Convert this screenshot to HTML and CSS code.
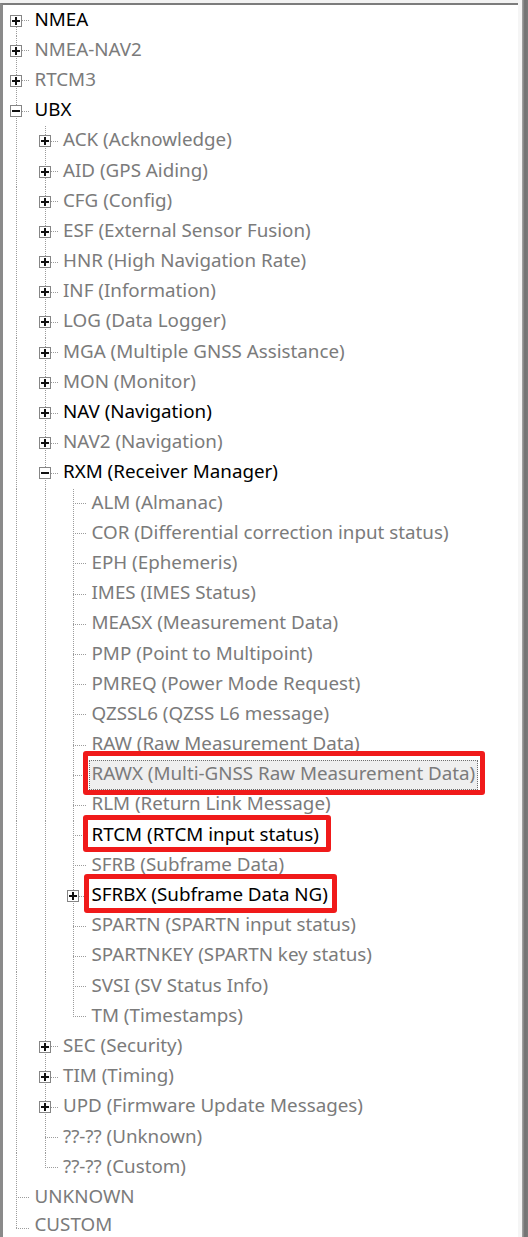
FILE: index.html
```html
<!DOCTYPE html>
<html>
<head>
<meta charset="utf-8">
<link rel="stylesheet" href="styles.css">
</head>
<body>
<div class="frame">
  <div class="tree">
    <div class="row"><span class="c first"><i class="box plus"></i></span><span class="t on">NMEA</span></div>
    <div class="row"><span class="c"><i class="box plus"></i></span><span class="t">NMEA-NAV2</span></div>
    <div class="row"><span class="c"><i class="box plus"></i></span><span class="t">RTCM3</span></div>
    <div class="row"><span class="c"><i class="box minus"></i></span><span class="t on">UBX</span></div>

    <div class="row"><span class="g pipe"></span><span class="c"><i class="box plus"></i></span><span class="t">ACK (Acknowledge)</span></div>
    <div class="row"><span class="g pipe"></span><span class="c"><i class="box plus"></i></span><span class="t">AID (GPS Aiding)</span></div>
    <div class="row"><span class="g pipe"></span><span class="c"><i class="box plus"></i></span><span class="t">CFG (Config)</span></div>
    <div class="row"><span class="g pipe"></span><span class="c"><i class="box plus"></i></span><span class="t">ESF (External Sensor Fusion)</span></div>
    <div class="row"><span class="g pipe"></span><span class="c"><i class="box plus"></i></span><span class="t">HNR (High Navigation Rate)</span></div>
    <div class="row"><span class="g pipe"></span><span class="c"><i class="box plus"></i></span><span class="t">INF (Information)</span></div>
    <div class="row"><span class="g pipe"></span><span class="c"><i class="box plus"></i></span><span class="t">LOG (Data Logger)</span></div>
    <div class="row"><span class="g pipe"></span><span class="c"><i class="box plus"></i></span><span class="t">MGA (Multiple GNSS Assistance)</span></div>
    <div class="row"><span class="g pipe"></span><span class="c"><i class="box plus"></i></span><span class="t">MON (Monitor)</span></div>
    <div class="row"><span class="g pipe"></span><span class="c"><i class="box plus"></i></span><span class="t on">NAV (Navigation)</span></div>
    <div class="row"><span class="g pipe"></span><span class="c"><i class="box plus"></i></span><span class="t">NAV2 (Navigation)</span></div>
    <div class="row"><span class="g pipe"></span><span class="c"><i class="box minus"></i></span><span class="t on">RXM (Receiver Manager)</span></div>

    <div class="row"><span class="g pipe"></span><span class="g pipe"></span><span class="c"></span><span class="t">ALM (Almanac)</span></div>
    <div class="row"><span class="g pipe"></span><span class="g pipe"></span><span class="c"></span><span class="t">COR (Differential correction input status)</span></div>
    <div class="row"><span class="g pipe"></span><span class="g pipe"></span><span class="c"></span><span class="t">EPH (Ephemeris)</span></div>
    <div class="row"><span class="g pipe"></span><span class="g pipe"></span><span class="c"></span><span class="t">IMES (IMES Status)</span></div>
    <div class="row"><span class="g pipe"></span><span class="g pipe"></span><span class="c"></span><span class="t">MEASX (Measurement Data)</span></div>
    <div class="row"><span class="g pipe"></span><span class="g pipe"></span><span class="c"></span><span class="t">PMP (Point to Multipoint)</span></div>
    <div class="row"><span class="g pipe"></span><span class="g pipe"></span><span class="c"></span><span class="t">PMREQ (Power Mode Request)</span></div>
    <div class="row"><span class="g pipe"></span><span class="g pipe"></span><span class="c"></span><span class="t">QZSSL6 (QZSS L6 message)</span></div>
    <div class="row"><span class="g pipe"></span><span class="g pipe"></span><span class="c"></span><span class="t">RAW (Raw Measurement Data)</span></div>
    <div class="row"><span class="g pipe"></span><span class="g pipe"></span><span class="c"></span><span class="t sel mark mark-rawx">RAWX (Multi-GNSS Raw Measurement Data)</span></div>
    <div class="row"><span class="g pipe"></span><span class="g pipe"></span><span class="c"></span><span class="t">RLM (Return Link Message)</span></div>
    <div class="row"><span class="g pipe"></span><span class="g pipe"></span><span class="c"></span><span class="t on mark mark-rtcm">RTCM (RTCM input status)</span></div>
    <div class="row"><span class="g pipe"></span><span class="g pipe"></span><span class="c"></span><span class="t">SFRB (Subframe Data)</span></div>
    <div class="row"><span class="g pipe"></span><span class="g pipe"></span><span class="c"><i class="box plus"></i></span><span class="t on mark mark-sfrbx">SFRBX (Subframe Data NG)</span></div>
    <div class="row"><span class="g pipe"></span><span class="g pipe"></span><span class="c"></span><span class="t">SPARTN (SPARTN input status)</span></div>
    <div class="row"><span class="g pipe"></span><span class="g pipe"></span><span class="c"></span><span class="t">SPARTNKEY (SPARTN key status)</span></div>
    <div class="row"><span class="g pipe"></span><span class="g pipe"></span><span class="c"></span><span class="t">SVSI (SV Status Info)</span></div>
    <div class="row"><span class="g pipe"></span><span class="g pipe"></span><span class="c last"></span><span class="t">TM (Timestamps)</span></div>

    <div class="row"><span class="g pipe"></span><span class="c"><i class="box plus"></i></span><span class="t">SEC (Security)</span></div>
    <div class="row"><span class="g pipe"></span><span class="c"><i class="box plus"></i></span><span class="t">TIM (Timing)</span></div>
    <div class="row"><span class="g pipe"></span><span class="c"><i class="box plus"></i></span><span class="t">UPD (Firmware Update Messages)</span></div>
    <div class="row"><span class="g pipe"></span><span class="c"></span><span class="t">??-?? (Unknown)</span></div>
    <div class="row"><span class="g pipe"></span><span class="c last"></span><span class="t">??-?? (Custom)</span></div>

    <div class="row"><span class="c"></span><span class="t">UNKNOWN</span></div>
    <div class="row"><span class="c last"></span><span class="t">CUSTOM</span></div>
  </div>
  <div class="gap"></div>
  <div class="edge"></div>
</div>
</body>
</html>
```

FILE: styles.css
```css
* { box-sizing: border-box; }
html, body { margin: 0; padding: 0; }
body {
  background: #f2f2f2;
  font-family: "Noto Sans", "Open Sans", "DejaVu Sans", sans-serif;
}
.frame {
  display: flex;
  height: 1237px;
  overflow: hidden;
}
.tree {
  width: 518px;
  flex: none;
  margin-top: 3px;
  border-left: 3px solid #8a8a8a;
  border-top: 2px solid #7c7c7c;
  background: #fff;
  padding-top: 0.5px;
  overflow: hidden;
}
.gap { width: 4px; flex: none; background: #f5f5f5; }
.edge {
  flex: 1;
  background: linear-gradient(to right, #a9a9a9, #727272 45%, #7a7a7a);
}

.row {
  display: flex;
  height: 30.2px;
}
.g, .c {
  width: 28.5px;
  flex: none;
}
.pipe {
  background: repeating-linear-gradient(to bottom, #9c9c9c 0 1px, transparent 1px 2px) 13px 0 / 1px 100% no-repeat;
}
.c {
  display: flex;
  align-items: center;
  padding-left: 7px;
  background:
    repeating-linear-gradient(to right, #9c9c9c 0 1px, transparent 1px 2px) 13px 50% / 14px 1px no-repeat,
    repeating-linear-gradient(to bottom, #9c9c9c 0 1px, transparent 1px 2px) 13px 0 / 1px 100% no-repeat;
}
.c.last {
  background:
    repeating-linear-gradient(to right, #9c9c9c 0 1px, transparent 1px 2px) 13px 50% / 14px 1px no-repeat,
    repeating-linear-gradient(to bottom, #9c9c9c 0 1px, transparent 1px 2px) 13px 0 / 1px 50% no-repeat;
}
.c.first {
  background:
    repeating-linear-gradient(to right, #9c9c9c 0 1px, transparent 1px 2px) 13px 50% / 14px 1px no-repeat,
    repeating-linear-gradient(to bottom, #9c9c9c 0 1px, transparent 1px 2px) 13px 100% / 1px 50% no-repeat;
}

.box {
  display: block;
  width: 12px;
  height: 12px;
  border: 1px solid #858585;
  background-color: #fff;
}
.plus {
  background:
    linear-gradient(#111, #111) 1px 4px / 8px 2px no-repeat,
    linear-gradient(#111, #111) 4px 1px / 2px 8px no-repeat,
    #fff;
}
.minus {
  background:
    linear-gradient(#111, #111) 1px 4px / 8px 2px no-repeat,
    #fff;
}

.t {
  display: flex;
  align-items: center;
  padding: 0 3px 4px;
  font-size: 18.8px;
  line-height: 20px;
  color: #7b7b7b;
  white-space: nowrap;
}
.row:last-child .t { padding-bottom: 9px; }
.t.on { color: #000; }
.sel {
  background: #efefef;
  outline: 1px dotted #6e6e6e;
  outline-offset: -1px;
}
.mark { position: relative; }
.mark::after {
  content: "";
  position: absolute;
  border: 5px solid #f01a1a;
  border-radius: 3px;
  pointer-events: none;
}
.mark-rawx::after { left: -6px; right: -7px; top: -9px; bottom: -5px; }
.mark-rtcm::after { left: -6px; right: -9px; top: -6px; bottom: -1px; }
.mark-sfrbx::after { left: -5px; right: -6px; top: -7px; bottom: -2px; }
```
